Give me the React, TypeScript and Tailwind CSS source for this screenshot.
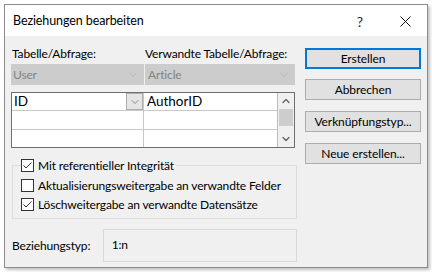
import { ChevronDown, ChevronUp } from 'lucide-react';

const font = { fontFamily: 'Lato, "Noto Sans", "Liberation Sans", sans-serif' };

function CheckBox({ checked }: { checked: boolean }) {
    return (
        <span className="flex h-[13px] w-[13px] shrink-0 items-center justify-center border border-[#333333] bg-white">
            {checked && (
                <svg width="11" height="11" viewBox="0 0 11 11">
                    <path d="M1.5 5.5 L4 8 L9.5 2.5" fill="none" stroke="#333333" strokeWidth="1" />
                </svg>
            )}
        </span>
    );
}

function DialogButton({ label, primary, className }: { label: string; primary?: boolean; className?: string }) {
    return (
        <button
            className={`flex h-[21px] w-[116px] items-center justify-center bg-[#e1e1e1] text-[12px] leading-none tracking-[-0.1px] text-black ${
                primary ? 'border-2 border-[#0078d7]' : 'border border-[#adadad]'
            } ${className ?? ''}`}
        >
            {label}
        </button>
    );
}

export default function App() {
    return (
        <div className="h-[272px] w-[432px] bg-white p-1 whitespace-nowrap" style={font}>
            <div className="flex h-[264px] w-[424px] flex-col border border-[#8c8c8c] bg-[#f0f0f0] shadow-[2px_2px_3px_rgba(0,0,0,0.25)]">
                {/* Title bar */}
                <div className="flex h-[31px] shrink-0 items-center bg-white pl-2 pt-[2px]">
                    <span className="flex-1 text-[12.5px] tracking-[-0.1px] text-black">Beziehungen bearbeiten</span>
                    <span className="mr-[37px] text-[14px] text-[#222]">?</span>
                    <svg width="11" height="11" viewBox="0 0 11 11" className="mr-[16px]">
                        <path d="M0.5 0.5 L10.5 10.5 M10.5 0.5 L0.5 10.5" stroke="#111" strokeWidth="1" />
                    </svg>
                </div>

                {/* Body */}
                <div className="flex flex-1 gap-2 pl-[6px] pt-[10px] text-[12px] tracking-[-0.15px]">
                    {/* Left column */}
                    <div className="flex w-[286px] flex-col">
                        <div className="flex h-4 leading-4 text-black">
                            <span className="w-[134px] pl-px">Tabelle/Abfrage:</span>
                            <span>Verwandte Tabelle/Abfrage:</span>
                        </div>

                        {/* Disabled combos */}
                        <div className="mt-[2px] flex h-[21px] w-[284px] gap-px text-[#838383]">
                            <div className="flex w-[133px] items-center justify-between bg-[#cccccc] pl-[2px] pr-[5px]">
                                <span>User</span>
                                <ChevronDown className="h-3 w-3 text-[#a8a8a8]" strokeWidth={1.25} />
                            </div>
                            <div className="flex flex-1 items-center justify-between bg-[#cccccc] pl-[3px] pr-[5px]">
                                <span>Article</span>
                                <ChevronDown className="h-3 w-3 text-[#a8a8a8]" strokeWidth={1.25} />
                            </div>
                        </div>

                        {/* Field grid */}
                        <div className="mt-[7px] flex h-[56px] w-[284px] border border-[#6e6e6e] bg-white">
                            <div className="grid flex-1 grid-cols-[132px_1fr] grid-rows-[18px_19px_1fr] text-[13.5px] leading-none tracking-normal text-black">
                                <div className="flex items-center justify-between border-b border-r border-[#c8c8c8]">
                                    <span className="pl-[2px]">ID</span>
                                    <span className="flex h-[17px] w-[17px] items-center justify-center border border-[#adadad] bg-[#e5e5e5]">
                                        <ChevronDown className="h-3 w-3 text-[#555]" strokeWidth={1.25} />
                                    </span>
                                </div>
                                <div className="flex items-center border-b border-[#c8c8c8] pl-[3px]">AuthorID</div>
                                <div className="border-b border-r border-[#c8c8c8]" />
                                <div className="border-b border-[#c8c8c8]" />
                                <div className="border-r border-[#c8c8c8]" />
                                <div />
                            </div>
                            {/* Scrollbar */}
                            <div className="flex w-[17px] flex-col items-center border-l border-[#bdbdbd] bg-[#f0f0f0]">
                                <ChevronUp className="mt-[2px] h-3 w-3 text-[#606060]" strokeWidth={2.5} />
                                <div className="mt-[2px] h-[17px] w-[14px] bg-[#cdcdcd]" />
                                <div className="flex-1" />
                                <ChevronDown className="mb-[2px] h-3 w-3 text-[#606060]" strokeWidth={2.5} />
                            </div>
                        </div>

                        {/* Referential integrity group */}
                        <fieldset className="ml-px mt-[11px] border border-[#dcdcdc] px-[8px] pb-[7px] leading-[13px] text-black">
                            <legend className="flex items-center gap-1 bg-[#f0f0f0] pr-[2px]">
                                <CheckBox checked />
                                <span>Mit referentieller Integrität</span>
                            </legend>
                            <div className="mt-[7px] flex items-center gap-1">
                                <CheckBox checked={false} />
                                <span>Aktualisierungsweitergabe an verwandte Felder</span>
                            </div>
                            <div className="mt-[6px] flex items-center gap-1">
                                <CheckBox checked />
                                <span>Löschweitergabe an verwandte Datensätze</span>
                            </div>
                        </fieldset>

                        {/* Relationship type */}
                        <div className="mt-[10px] flex items-center text-black">
                            <span className="w-[92px] pl-px">Beziehungstyp:</span>
                            <div className="flex h-[33px] w-[195px] items-center border border-[#d9d9d9] pb-px pl-[8px]">
                                1:n
                            </div>
                        </div>
                    </div>

                    {/* Right column: buttons */}
                    <div className="flex flex-col">
                        <DialogButton label="Erstellen" primary className="mt-[2px]" />
                        <DialogButton label="Abbrechen" className="mt-[10px]" />
                        <DialogButton label="Verknüpfungstyp..." className="mt-[11px]" />
                        <DialogButton label="Neue erstellen..." className="mt-[11px]" />
                    </div>
                </div>
            </div>
        </div>
    );
}
